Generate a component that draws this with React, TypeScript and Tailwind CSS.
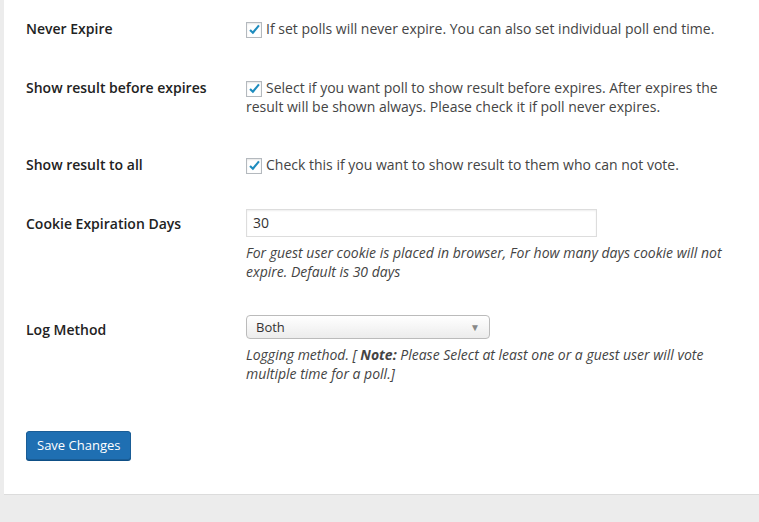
import React from "react";

const Check = () => (
  <span className="inline-flex items-center justify-center w-[16px] h-[16px] border border-[#b4b9be] bg-white shadow-[inset_0_1px_2px_rgba(0,0,0,0.1)] mr-[4px] align-[-2px]">
    <svg width="13" height="13" viewBox="0 0 16 16"><path d="M2.5 8.5 L6 12 L13.5 3" fill="none" stroke="#1e8cbe" strokeWidth="2.6" /></svg>
  </span>
);

export default function App() {
  return (
    <div className="w-[759px] h-[522px] bg-[#ececec] pl-[4px] overflow-hidden" style={{ fontFamily: '"Open Sans", sans-serif' }}>
      <div className="bg-white h-[495px] border-b border-[#dcdcdc] pl-[22px] pt-[19px] text-[14px] leading-[19px] text-[#444]">
        <div className="flex">
          <div className="w-[220px] font-semibold text-[#222]">Never Expire</div>
          <div><Check />If set polls will never expire. You can also set individual poll end time.</div>
        </div>
        <div className="flex mt-[40px]">
          <div className="w-[220px] font-semibold text-[#222]">Show result before expires</div>
          <div className="w-[480px]"><Check />Select if you want poll to show result before expires. After expires the result will be shown always. Please check it if poll never expires.</div>
        </div>
        <div className="flex mt-[39px]">
          <div className="w-[220px] font-semibold text-[#222]">Show result to all</div>
          <div><Check />Check this if you want to show result to them who can not vote.</div>
        </div>
        <div className="flex mt-[35px]">
          <div className="w-[220px] font-semibold text-[#222] pt-[5px]">Cookie Expiration Days</div>
          <div className="w-[490px]">
            <div className="w-[351px] h-[28px] border border-[#ddd] shadow-[inset_0_1px_2px_rgba(0,0,0,0.07)] px-[6px] leading-[26px] text-[#333]">30</div>
            <div className="italic mt-[6px]">For guest user cookie is placed in browser, For how many days cookie will not expire. Default is 30 days</div>
          </div>
        </div>
        <div className="flex mt-[34px]">
          <div className="w-[220px] font-semibold text-[#222] pt-[5px]">Log Method</div>
          <div className="w-[490px]">
            <div className="w-[244px] h-[24px] border border-[#bbb] rounded-[4px] bg-gradient-to-b from-white to-[#ececec] flex items-center justify-between px-[9px] text-[13px] text-[#333]">
              <span>Both</span>
              <span className="text-[10px] text-[#888]">▼</span>
            </div>
            <div className="italic mt-[6px]">Logging method. [ <span className="font-bold">Note:</span> Please Select at least one or a guest user will vote multiple time for a poll.]</div>
          </div>
        </div>
        <button className="mt-[48px] h-[29px] px-[10px] bg-[#1f6fb2] border border-[#1a5d96] rounded-[3px] text-white text-[13px] shadow-[0_1px_0_#0e4f86]">Save Changes</button>
      </div>
    </div>
  );
}
